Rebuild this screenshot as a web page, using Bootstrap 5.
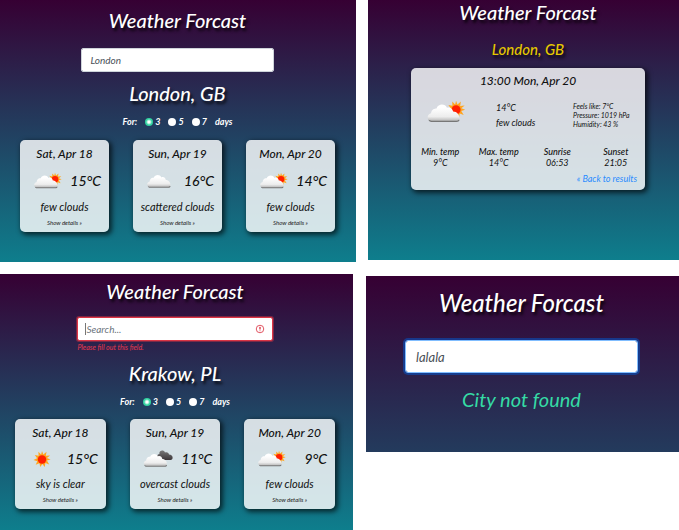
<!DOCTYPE html>
<html lang="en">
<head>
<meta charset="utf-8">
<meta name="viewport" content="width=device-width, initial-scale=1">
<title>Weather Forcast</title>
<link href="https://cdn.jsdelivr.net/npm/bootstrap@5.3.0/dist/css/bootstrap.min.css" rel="stylesheet">
<style>
body{font-family:Lato,"Open Sans",sans-serif;font-style:italic;background:#fff;color:#111}
.board{gap:10px}
.col-left{flex:356 1 0;min-width:0;gap:12px}
.col-right{flex:313 1 0;min-width:0;gap:16px}
.screen{background:linear-gradient(#360033,#0b8793 107%)}
.title,.city{color:#fff;text-align:center;margin:0;text-shadow:2px 3px 3px rgba(0,0,0,.8)}
.title{font-size:20px;line-height:24px;font-weight:500}
.city{font-size:20px;line-height:24px;font-weight:500}
.results{padding:8px 21px 30px 20px}
.results-error{padding:5px 18px 21px 15px;margin-right:3px}
.search{width:61%;margin:16px auto 0;position:relative}
.results-error .search{margin-top:14px}
.search .form-control{height:24px;min-height:0;padding:0 8px;font-size:10px;font-style:italic;line-height:22px;border-radius:2px;color:#495057;border-color:#ced4da}
.search .form-control::placeholder{color:#6c757d}
.search .is-invalid{border-color:#dc3545;box-shadow:0 0 0 1px rgba(220,53,69,.45);background-size:10px 10px;background-position:right 7px center}
.search .invalid-feedback{font-size:7px;line-height:8px;margin-top:2px;color:#e63950}
.caret{position:absolute;left:8px;top:6px;width:1px;height:12px;background:#777}
.results .city{margin-top:9px}
.results-error .city{margin-top:10px}
.days{gap:8px;margin-top:10px;font-size:9px;line-height:14px;font-weight:700;color:#fff}
.days .choice{gap:2px}
.days .form-check-input{width:8px;height:8px;margin:0;border:0;background:#fff}
.days .form-check-input:checked{background:radial-gradient(circle,#fff 0 1px,#31d3a0 3px)}
.cards{gap:24px;margin-top:11px}
.results-error .cards{margin-top:10px}
.glass{background:rgba(255,255,255,.82);border:0;border-radius:5px;box-shadow:2px 2px 5px 1px rgba(0,0,0,.65);color:#111}
.day{flex:1 1 0;min-width:0;padding:6px 0 5px;text-align:center;white-space:nowrap}
.day h3{font-size:12px;line-height:16px;margin:0;font-weight:500}
.now{margin-top:7px;height:24px;padding:0 8px 0 13px;font-size:14px;line-height:24px;font-weight:500}
.now svg{width:30px;height:20px}
.sky{font-size:11px;line-height:16px;margin:6px 0 0}
.more{font-size:6px;line-height:8px;margin-top:4px;color:#222;text-decoration:none}
.results-error .now{margin-top:6px}
.results-error .sky{margin-top:5px}
.single{margin-left:2px;padding:0 34px 70px 43px}
.single .city{margin-top:15px;font-size:15px;line-height:20px;color:#e6c800}
.detail{margin-top:9px;padding:5px 0 6px}
.detail h3{font-size:12px;line-height:16px;margin:0;text-align:center;font-weight:500}
.facts{display:grid;grid-template-columns:85fr 77fr 72fr;margin-top:11px;white-space:nowrap}
.facts svg{width:41px;height:28px;margin:-6px 0 0 15px}
.facts .main{font-size:9px;line-height:15px}
.facts .side{font-size:7px;line-height:9px}
.stats{margin:16px 0 0;font-size:9px;line-height:11px;text-align:center}
.stats dt{font-weight:500}
.back{font-size:9px;line-height:10px;margin:6px 8px 0 0;color:#2a8cff;text-decoration:none}
.missing{padding:11px 41px 39px 39px;background:linear-gradient(#360033,#0b8793 230%)}
.missing .title{font-size:24px;line-height:32px}
.missing .search{width:100%;margin-top:21px}
.missing .form-control{height:33px;padding:0 10px;font-size:13px;line-height:31px;border-color:#80bdff;box-shadow:0 0 0 2px rgba(0,90,210,.5);border-radius:3px}
.notice{color:#35dba5;font-size:20px;line-height:28px;margin:12px 0 0;text-align:center}
</style>
<script src="https://cdn.jsdelivr.net/npm/bootstrap@5.3.0/dist/js/bootstrap.bundle.min.js"></script>
</head>
<body>
<svg width="0" height="0" class="position-absolute" aria-hidden="true">
  <defs>
    <linearGradient id="puff" x1="0" y1="0" x2="0" y2="1"><stop offset=".2" stop-color="#fff"/><stop offset=".75" stop-color="#ededed"/><stop offset="1" stop-color="#bbb"/></linearGradient>
    <linearGradient id="storm" x1="0" y1="0" x2="0" y2="1"><stop offset="0" stop-color="#777"/><stop offset="1" stop-color="#3c3638"/></linearGradient>
    <symbol id="cloud-shape" viewBox="0 0 30 20">
      <path d="M4 17.500h20c2 0 3-1 2.500-2H1.500c0 1 1 2 2.500 2z" fill="#777"/>
      <path d="M4 16.500C0 16.500-.3 11.500 3.500 10.500C4 7 6.500 6.500 8 6.500C9.500 2.500 15 2.500 16.500 6C19 5 21 6.500 21.500 9C24.500 9 27 12 26.500 14.500C26 16.500 25 16.500 23 16.500z" fill="url(#puff)"/>
    </symbol>
    <symbol id="sun-shape" viewBox="0 0 20 20">
      <path d="M10 1l1.500 4 3.500-3-.7 4.500L19 6l-3.500 3 4 1.500-4 1.200L18 16l-4.200-1.500L13 19l-2.500-3.500L8 19l-.8-4.300L3 16.500l1.800-4L.5 11l4-1.700L2 5.500l4.200.8L6 2l3 3z" fill="#ffa51f"/>
      <circle cx="10" cy="10.500" r="4.700" fill="#ff2000"/>
    </symbol>
    <symbol id="few" viewBox="0 0 30 20"><use href="#sun-shape" x="15" y="1" width="14" height="14"/><use href="#cloud-shape" x="0" y="1.500" width="28" height="18"/></symbol>
    <symbol id="scattered" viewBox="0 0 30 20"><use href="#cloud-shape" x="0" y="1" width="28" height="18"/></symbol>
    <symbol id="clear" viewBox="0 0 30 20"><use href="#sun-shape" x="5" y="1" width="18" height="18"/></symbol>
    <symbol id="overcast" viewBox="0 0 30 20"><path d="M16 11C13 9 14 5 16.500 5C15.500 1 21 .5 22 3.500C24 2.500 26 4 26 5.500C30 5.500 31 10.500 27.500 11z" fill="url(#storm)"/><use href="#cloud-shape" x="0" y="2" width="27" height="18"/></symbol>
  </defs>
</svg>

<main class="board d-flex align-items-start">
  <div class="col-left d-flex flex-column">
    <section class="screen results">
      <h1 class="title">Weather Forcast</h1>
      <form class="search"><input class="form-control" type="text" value="London" aria-label="City"></form>
      <h2 class="city">London, GB</h2>
      <div class="days d-flex justify-content-center" role="radiogroup" aria-label="Number of days">
        <span>For:</span>
        <span class="choice d-flex align-items-center"><input class="form-check-input" type="radio" name="d1" id="a3" checked><label for="a3">3</label></span>
        <span class="choice d-flex align-items-center"><input class="form-check-input" type="radio" name="d1" id="a5"><label for="a5">5</label></span>
        <span class="choice d-flex align-items-center"><input class="form-check-input" type="radio" name="d1" id="a7"><label for="a7">7</label></span>
        <span>days</span>
      </div>
      <div class="cards d-flex">
        <article class="card glass day"><h3>Sat, Apr 18</h3><div class="now d-flex align-items-center justify-content-between"><svg aria-hidden="true"><use href="#few"/></svg><span>15°C</span></div><p class="sky">few clouds</p><a class="more" href="#">Show details »</a></article>
        <article class="card glass day"><h3>Sun, Apr 19</h3><div class="now d-flex align-items-center justify-content-between"><svg aria-hidden="true"><use href="#scattered"/></svg><span>16°C</span></div><p class="sky">scattered clouds</p><a class="more" href="#">Show details »</a></article>
        <article class="card glass day"><h3>Mon, Apr 20</h3><div class="now d-flex align-items-center justify-content-between"><svg aria-hidden="true"><use href="#few"/></svg><span>14°C</span></div><p class="sky">few clouds</p><a class="more" href="#">Show details »</a></article>
      </div>
    </section>

    <section class="screen results-error">
      <h1 class="title">Weather Forcast</h1>
      <form class="search" novalidate><input class="form-control is-invalid" type="text" placeholder="Search..." aria-label="City" aria-describedby="req"><span class="caret"></span><div class="invalid-feedback" id="req">Please fill out this field.</div></form>
      <h2 class="city">Krakow, PL</h2>
      <div class="days d-flex justify-content-center" role="radiogroup" aria-label="Number of days">
        <span>For:</span>
        <span class="choice d-flex align-items-center"><input class="form-check-input" type="radio" name="d2" id="b3" checked><label for="b3">3</label></span>
        <span class="choice d-flex align-items-center"><input class="form-check-input" type="radio" name="d2" id="b5"><label for="b5">5</label></span>
        <span class="choice d-flex align-items-center"><input class="form-check-input" type="radio" name="d2" id="b7"><label for="b7">7</label></span>
        <span>days</span>
      </div>
      <div class="cards d-flex">
        <article class="card glass day"><h3>Sat, Apr 18</h3><div class="now d-flex align-items-center justify-content-between"><svg aria-hidden="true"><use href="#clear"/></svg><span>15°C</span></div><p class="sky">sky is clear</p><a class="more" href="#">Show details »</a></article>
        <article class="card glass day"><h3>Sun, Apr 19</h3><div class="now d-flex align-items-center justify-content-between"><svg aria-hidden="true"><use href="#overcast"/></svg><span>11°C</span></div><p class="sky">overcast clouds</p><a class="more" href="#">Show details »</a></article>
        <article class="card glass day"><h3>Mon, Apr 20</h3><div class="now d-flex align-items-center justify-content-between"><svg aria-hidden="true"><use href="#few"/></svg><span>9°C</span></div><p class="sky">few clouds</p><a class="more" href="#">Show details »</a></article>
      </div>
    </section>
  </div>

  <div class="col-right d-flex flex-column">
    <section class="screen single">
      <h1 class="title">Weather Forcast</h1>
      <h2 class="city">London, GB</h2>
      <article class="card glass detail">
        <h3>13:00 Mon, Apr 20</h3>
        <div class="facts align-items-center">
          <svg aria-hidden="true"><use href="#few"/></svg>
          <div class="main"><div>14°C</div><div>few clouds</div></div>
          <div class="side"><div>Feels like: 7°C</div><div>Pressure: 1019 hPa</div><div>Humidity: 43 %</div></div>
        </div>
        <dl class="stats row g-0">
          <div class="col-3"><dt>Min. temp</dt><dd class="m-0">9°C</dd></div>
          <div class="col-3"><dt>Max. temp</dt><dd class="m-0">14°C</dd></div>
          <div class="col-3"><dt>Sunrise</dt><dd class="m-0">06:53</dd></div>
          <div class="col-3"><dt>Sunset</dt><dd class="m-0">21:05</dd></div>
        </dl>
        <a class="back align-self-end" href="#">« Back to results</a>
      </article>
    </section>

    <section class="screen missing">
      <h1 class="title">Weather Forcast</h1>
      <form class="search"><input class="form-control" type="text" value="lalala" aria-label="City"></form>
      <p class="notice">City not found</p>
    </section>
  </div>
</main>
</body>
</html>
